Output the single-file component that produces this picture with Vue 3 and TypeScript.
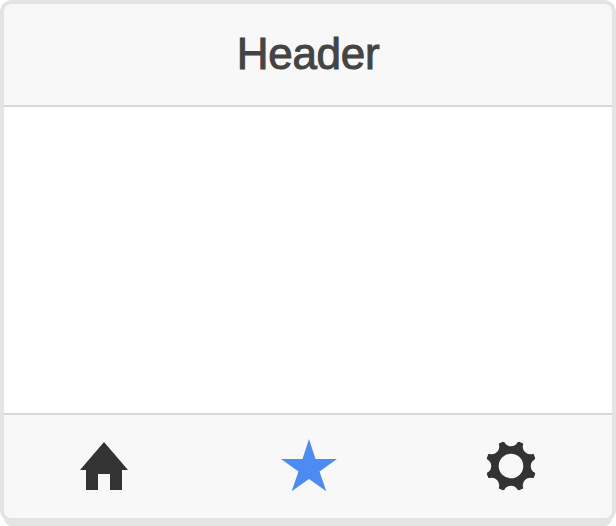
<script setup lang="ts">
import { ref } from 'vue'

type Tab = 'home' | 'favorites' | 'settings'
const tabs: Tab[] = ['home', 'favorites', 'settings']
const active = ref<Tab>('favorites')
</script>

<template>
  <div class="stage">
    <div class="screen">
      <header class="header"><h1 class="title">Header</h1></header>
      <main class="content"></main>
      <nav class="tabs">
        <button
          v-for="tab in tabs"
          :key="tab"
          class="tab"
          :class="{ active: tab === active }"
          :aria-label="tab"
          @click="active = tab"
        >
          <svg v-if="tab === 'home'" class="icon" viewBox="0 0 60 60">
            <path d="M30 6L54 34H48V54H36V38H24V54H12V34H6Z" />
          </svg>
          <svg v-else-if="tab === 'favorites'" class="icon" viewBox="0 0 60 60">
            <path d="M31 3L37.500 23H59L41.500 35.400L48.300 55.300L31 43L13.700 55.300L20.500 35.400L3 23H24.500Z" />
          </svg>
          <svg v-else class="icon" viewBox="-30 -30 60 60">
            <path
              fill-rule="evenodd"
              d="M-6.600-23.700A7.500 7.500 0 0 0 6.600-23.700L8-24.200L12.100-22.600L12.100-21.400A7.500 7.500 0 0 0 21.400-12.100L22.600-12.100L24.200-8L23.700-6.600A7.500 7.500 0 0 0 23.700 6.600L24.200 8L22.600 12.100L21.400 12.100A7.500 7.500 0 0 0 12.100 21.400L12.100 22.600L8 24.200L6.600 23.700A7.500 7.500 0 0 0-6.600 23.700L-8 24.200L-12.100 22.600L-12.100 21.400A7.500 7.500 0 0 0-21.400 12.100L-22.600 12.100L-24.200 8L-23.700 6.600A7.500 7.500 0 0 0-23.700-6.600L-24.200-8L-22.600-12.100L-21.400-12.100A7.500 7.500 0 0 0-12.100-21.400L-12.100-22.600L-8-24.200ZM12.300 0A12.300 12.300 0 1 0-12.300 0A12.300 12.300 0 1 0 12.300 0Z"
            />
          </svg>
        </button>
      </nav>
    </div>
  </div>
</template>

<style>
body {
  margin: 0;
  background: #fff;
}
</style>

<style scoped>
.stage {
  box-sizing: border-box;
  width: 616px;
  height: 526px;
  padding: 4px 4px 8px;
}
.screen {
  height: 514px;
  display: flex;
  flex-direction: column;
  overflow: hidden;
  border-radius: 8px;
  box-shadow: 0 0 0 4px #e4e4e4, 0 8px 0 #e4e4e4;
  background: #fff;
  font-family: "Liberation Sans", Arial, sans-serif;
}
.header {
  box-sizing: border-box;
  height: 103px;
  display: flex;
  align-items: center;
  justify-content: center;
  padding-bottom: 2px;
  border-bottom: 2px solid #d8d8d8;
  background: #f8f8f8;
}
.title {
  margin: 0;
  font-size: 44px;
  line-height: 50px;
  font-weight: 400;
  letter-spacing: -0.3px;
  color: #444;
  -webkit-text-stroke: 1px #444;
}
.content {
  flex: 1;
}
.tabs {
  box-sizing: border-box;
  height: 105px;
  display: flex;
  align-items: center;
  justify-content: space-between;
  padding: 0 71px 1px 70px;
  border-top: 2px solid #d8d8d8;
  background: #f8f8f8;
}
.tab {
  display: flex;
  padding: 0;
  border: 0;
  background: none;
  color: #333;
}
.tab.active {
  color: #4d8bf0;
}
.icon {
  width: 60px;
  height: 60px;
  fill: currentColor;
}
</style>
